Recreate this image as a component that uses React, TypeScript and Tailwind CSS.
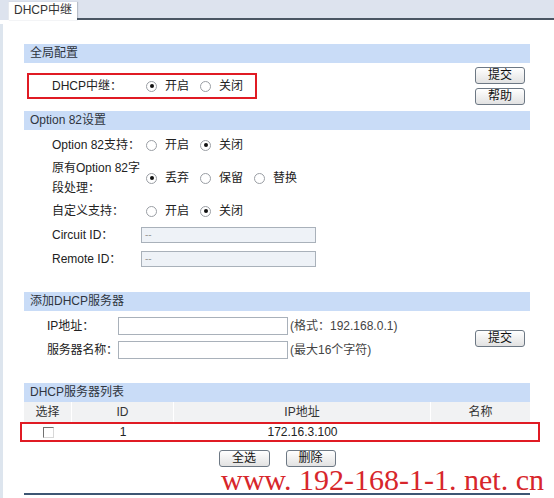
import type { ReactNode } from "react";

// classic router admin page: DHCP relay settings

function SectionHeader({ title }: { title: string }) {
  return (
    <div className="h-[19px] bg-[#c9dcf7] pl-[6px] leading-[19px] text-[#2f3540]">{title}</div>
  );
}

function Radio({ checked }: { checked?: boolean }) {
  return (
    <span className="flex h-[11px] w-[11px] shrink-0 items-center justify-center rounded-full border border-[#9a9ea4] bg-white">
      {checked && <span className="h-[4px] w-[4px] rounded-full bg-[#111]" />}
    </span>
  );
}

function RadioGroup({ options, selected }: { options: string[]; selected: number }) {
  return (
    <div className="flex items-center gap-[11px]">
      {options.map((opt, i) => (
        <div key={opt} className="flex items-center gap-[8px]">
          <Radio checked={i === selected} />
          <span>{opt}</span>
        </div>
      ))}
    </div>
  );
}

function Btn({ children, w = "w-[50px]" }: { children: ReactNode; w?: string }) {
  return (
    <button
      className={`${w} h-[17px] rounded-[3px] border border-[#6d7884] bg-gradient-to-b from-white to-[#e2e2e2] text-[12px] leading-[15px] text-[#111]`}
    >
      {children}
    </button>
  );
}

function Row({ label, h = "h-[24px]", labelW = "w-[94px]", children }: { label: ReactNode; h?: string; labelW?: string; children: ReactNode }) {
  return (
    <div className={`flex ${h} items-center pl-[28px]`}>
      <div className={`${labelW} shrink-0`}>{label}</div>
      {children}
    </div>
  );
}

export default function App() {
  return (
    <div className="relative h-[498px] w-[554px] overflow-hidden bg-white text-[12px] text-[#222] [font-family:'Liberation_Sans','Noto_Sans_CJK_SC',sans-serif]">
      {/* tab bar */}
      <div className="flex h-[20px] bg-[#dde3ee]">
        <div className="w-[8px]" />
        <div className="mt-[2px] h-[18px] w-[69px] border-l border-[#e6e9ee] bg-white pl-[5px] leading-[16px] text-[#333] shadow-[1px_0_1px_#b8bec8]">
          DHCP中继
        </div>
        <div className="flex-1 border-b-2 border-[#4a5663]" />
      </div>

      <div className="flex h-[478px]">
        <div className="mt-[4px] w-[3px] bg-[#dde5ee]" />
        <div className="ml-[21px] flex w-[506px] flex-col pt-[24px]">
          {/* global */}
          <SectionHeader title="全局配置" />
          <div className="flex h-[48px] items-start justify-between pr-[5px]">
            <div className="ml-[3px] mt-[10px] flex h-[26px] w-[230px] items-center border-2 border-[#e01b24] pl-[23px]">
              <div className="w-[94px]">DHCP中继：</div>
              <RadioGroup options={["开启", "关闭"]} selected={0} />
            </div>
            <div className="mt-[4px] flex flex-col gap-[4px]">
              <Btn>提交</Btn>
              <Btn>帮助</Btn>
            </div>
          </div>

          {/* option 82 */}
          <SectionHeader title="Option 82设置" />
          <div className="mb-[21px] flex flex-col pt-[3px]">
            <Row label="Option 82支持：">
              <RadioGroup options={["开启", "关闭"]} selected={1} />
            </Row>
            <Row
              h="h-[42px]"
              label={
                <div className="leading-[20px]">
                  原有Option 82字
                  <br />
                  段处理：
                </div>
              }
            >
              <RadioGroup options={["丢弃", "保留", "替换"]} selected={0} />
            </Row>
            <Row label="自定义支持：">
              <RadioGroup options={["开启", "关闭"]} selected={1} />
            </Row>
            <Row label="Circuit ID：" labelW="w-[89px]">
              <div className="h-[16px] w-[175px] border border-[#a9b1ba] bg-[#eef2f7] pl-[3px] text-[10px] leading-[14px] text-[#999]">--</div>
            </Row>
            <Row label="Remote ID：" labelW="w-[89px]">
              <div className="h-[16px] w-[175px] border border-[#a9b1ba] bg-[#eef2f7] pl-[3px] text-[10px] leading-[14px] text-[#999]">--</div>
            </Row>
          </div>

          {/* add server */}
          <SectionHeader title="添加DHCP服务器" />
          <div className="flex h-[72px] items-start justify-between pr-[5px] pt-[6px]">
            <div className="flex flex-col gap-[6px] pl-[23px]">
              <div className="flex h-[18px] items-center">
                <div className="w-[71px] shrink-0 whitespace-nowrap">IP地址：</div>
                <div className="h-[18px] w-[170px] border border-[#a9b1ba] bg-white" />
                <span className="ml-[2px] text-[#444]">(格式：192.168.0.1)</span>
              </div>
              <div className="flex h-[18px] items-center">
                <div className="w-[71px] shrink-0 whitespace-nowrap tracking-[-0.2px]">服务器名称：</div>
                <div className="h-[18px] w-[170px] border border-[#a9b1ba] bg-white" />
                <span className="ml-[2px] text-[#444]">(最大16个字符)</span>
              </div>
            </div>
            <div className="mt-[12px]">
              <Btn>提交</Btn>
            </div>
          </div>

          {/* server list */}
          <SectionHeader title="DHCP服务器列表" />
          <div className="grid h-[20px] grid-cols-[48px_102px_257px_99px] bg-[#f1f2f3] text-center leading-[20px] text-[#333]">
            <div className="border-r border-white">选择</div>
            <div className="border-r border-white">ID</div>
            <div className="border-r border-white">IP地址</div>
            <div>名称</div>
          </div>
          <div className="relative grid h-[20px] grid-cols-[48px_102px_257px_99px] text-center leading-[20px]">
            <div className="flex items-center justify-center">
              <span className="h-[11px] w-[11px] border border-b-[#d8d8d8] border-l-[#707070] border-r-[#d8d8d8] border-t-[#707070] bg-white" />
            </div>
            <div>1</div>
            <div>172.16.3.100</div>
            <div />
            <div className="absolute inset-y-0 -left-[4px] -right-[10px] border-2 border-[#e01b24]" />
          </div>
          <div className="mt-[8px] flex justify-center gap-[16px]">
            <Btn w="w-[51px]">全选</Btn>
            <Btn>删除</Btn>
          </div>
          <div className="mt-[26px] h-[2px] bg-[#3d5673]" />
        </div>
      </div>

      {/* watermark stamp */}
      <div className="absolute left-[221px] top-[470px] whitespace-nowrap text-[30px] leading-[20px] text-[#d7262b] [font-family:'Liberation_Serif',serif]">
        www. 192-168-1-1. net. cn
      </div>
    </div>
  );
}
